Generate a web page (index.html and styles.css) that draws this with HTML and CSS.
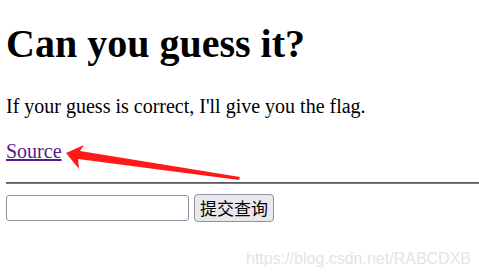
FILE: index.html
```html
<!DOCTYPE html>
<html>
<head>
<meta charset="utf-8">
<link rel="stylesheet" href="styles.css">
</head>
<body>
<h1 class="title">Can you guess it?</h1>
<p class="intro">If your guess is correct, I'll give you the flag.</p>
<p class="src"><a class="src-link" href="#">Source</a></p>
<hr class="rule">
<form class="guess-form">
<input class="guess-input" type="text" name="guess"><input class="guess-btn" type="submit" value="提交查询">
</form>
<svg class="arrow" width="200" height="40" viewBox="0 0 200 40">
<polygon points="6,8 24,0 20,6 180,32 179,35 18,14 19,24" fill="#ff1a1a"/>
</svg>
<div class="watermark">https://blog.csdn.net/RABCDXB</div>
</body>
</html>
```
FILE: styles.css
```css
html, body { margin: 0; padding: 0; background: #fff; }
body {
  font-family: "Liberation Serif", "Times New Roman", serif;
  font-size: 20px;
  color: #000;
  padding: 0 0 0 6px;
  position: relative;
  height: 279px;
  overflow: hidden;
}
.title {
  font-size: 40px;
  font-weight: bold;
  margin: 21px 0 0 0;
  line-height: 46px;
}
.intro { margin: 28px 0 0 0; line-height: 23px; }
.src { margin: 22px 0 0 0; line-height: 23px; }
.src-link { color: #551a8b; text-decoration: underline; }
.rule {
  border: 0;
  border-top: 1px solid #5a5a5a;
  border-bottom: 1px solid #7a7a7a;
  margin: 19px 0 0 0;
  height: 0;
}
.guess-form { margin: 10px 0 0 0; display: flex; align-items: center; gap: 5px; }
.guess-input {
  width: 183px; height: 26px; box-sizing: border-box;
  border: 1px solid #8f8f9d; border-radius: 3px; margin: 0; padding: 0 3px;
}
.guess-btn {
  height: 28px; box-sizing: border-box; margin: 0;
  font-family: "Noto Sans CJK SC", sans-serif; font-size: 17px;
  border: 1px solid #8f8f9d; border-radius: 4px; background: #e9e9ed;
  padding: 0 5px; line-height: 24px; color: #000;
}
.arrow { position: absolute; left: 60px; top: 145px; }
.watermark {
  position: absolute; left: 246px; top: 250px;
  font-family: "Liberation Sans", Arial, sans-serif; font-size: 16px;
  color: #e4e4e4;
}
```
